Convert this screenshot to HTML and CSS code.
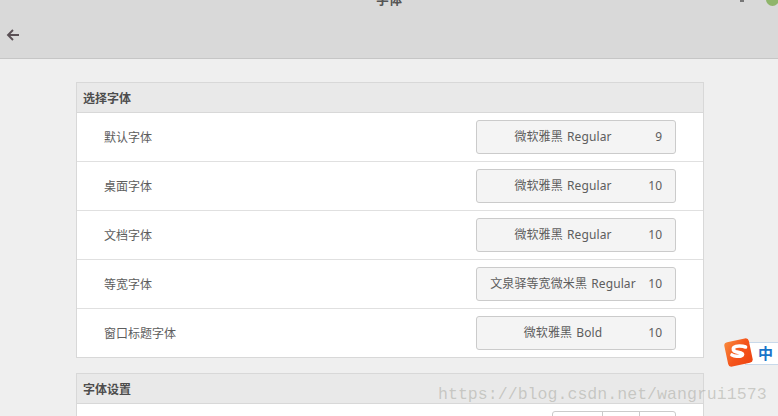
FILE: index.html
```html
<!DOCTYPE html>
<html lang="zh">
<head>
<meta charset="utf-8">
<title>字体</title>
<link rel="stylesheet" href="styles.css">
</head>
<body>
<div class="app">
  <header class="topbar">
    <div class="titlebar">
      <span class="win-title">字体</span>
      <span class="win-min"></span>
      <span class="win-close"></span>
    </div>
    <button class="back" aria-label="返回">
      <svg width="14" height="14" viewBox="0 0 14 14"><path d="M13 7H2.500M7 2 2 7l5 5" fill="none" stroke="#5a5055" stroke-width="1.900"/></svg>
    </button>
  </header>
  <main class="content">
    <section class="panel">
      <h2 class="panel-head">选择字体</h2>
      <div class="row"><span class="label">默认字体</span>
        <button class="font-btn"><span class="font-name">微软雅黑 Regular</span><span class="font-size">9</span></button></div>
      <div class="row"><span class="label">桌面字体</span>
        <button class="font-btn"><span class="font-name">微软雅黑 Regular</span><span class="font-size">10</span></button></div>
      <div class="row"><span class="label">文档字体</span>
        <button class="font-btn"><span class="font-name">微软雅黑 Regular</span><span class="font-size">10</span></button></div>
      <div class="row"><span class="label">等宽字体</span>
        <button class="font-btn"><span class="font-name">文泉驿等宽微米黑 Regular</span><span class="font-size">10</span></button></div>
      <div class="row"><span class="label">窗口标题字体</span>
        <button class="font-btn"><span class="font-name">微软雅黑 Bold</span><span class="font-size">10</span></button></div>
    </section>
    <section class="panel panel-second">
      <h2 class="panel-head">字体设置</h2>
      <div class="row row-seg">
        <div class="segments"><span class="seg seg-a"></span><span class="seg seg-b"></span><span class="seg seg-c"></span></div>
      </div>
    </section>
  </main>
  <div class="watermark">https://blog.csdn.net/wangrui1573</div>
  <div class="ime">
    <svg class="ime-logo" width="30" height="30" viewBox="0 0 30 30">
      <defs>
        <linearGradient id="imeFill" x1="0" y1="0" x2="1" y2="1">
          <stop offset="0" stop-color="#f98a3c"/>
          <stop offset="0.5" stop-color="#f4551c"/>
          <stop offset="1" stop-color="#ee4310"/>
        </linearGradient>
      </defs>
      <rect x="2" y="2" width="25" height="25" rx="3.500" fill="url(#imeFill)" transform="rotate(-12 14.500 14.500)"/>
      <path d="M21.500 9c-2.500-1-9-1.800-11.500.3-1.700 1.800-.6 3.700 2 4.400l5 1.200c2.200.6 2 2.400.3 3-2.300.8-7 .3-9.300-.9" fill="none" stroke="#fff" stroke-width="3.600" stroke-linecap="round"/>
    </svg>
    <span class="ime-text">中</span>
  </div>
</div>
</body>
</html>
```
FILE: styles.css
```css
* { box-sizing: border-box; }
html, body { margin: 0; height: 100%; overflow: hidden; }
body { font-family: "Noto Sans", "Noto Sans CJK SC", sans-serif; color: #5b5b5b; font-size: 12px; }
.app { position: relative; width: 778px; height: 416px; overflow: hidden; background: #efefef; }

.topbar { height: 59px; background: #d9d9d9; border-bottom: 1px solid #c6c6c6; }
.titlebar { height: 0; display: flex; justify-content: center; }
.win-title { margin-top: -10px; font-size: 13px; line-height: 18px; font-weight: 700; color: #555; height: 18px; }
.win-min { position: absolute; left: 740px; top: 0; width: 4px; height: 2px; background: #777; }
.win-close { position: absolute; left: 766px; top: -7px; width: 13px; height: 13px; border-radius: 50%; background: #8fb56b; }
.back { display: block; margin: 0; padding: 0; width: 14px; height: 14px; border: 0; background: none; position: relative; left: 6px; top: 28px; }
.back svg { display: block; }

.content { padding: 23px 74px 0 76px; }
.panel { background: #fff; border: 1px solid #d8d8d8; }
.panel-second { margin-top: 15px; }
.panel-head { margin: 0; height: 30px; padding: 1px 6px 0; font-size: 12px; line-height: 29px; font-weight: 700; color: #4d4d4d; background: #e9e9e9; border-bottom: 1px solid #d8d8d8; }

.row { height: 49px; display: flex; align-items: center; justify-content: space-between; padding: 0 27px; border-bottom: 1px solid #e0e0e0; }
.row:last-child { border-bottom: 0; height: 48px; }
.label { font-size: 12px; color: #5d5d5d; }

.font-btn { width: 200px; height: 34px; display: flex; align-items: center; padding: 0 13px 2px; background: #f4f4f4; border: 1px solid #cbcbcb; border-radius: 3px; font: inherit; color: #5d5d5d; }
.font-name { flex: 1; min-width: 0; text-align: center; font-size: 12px; word-spacing: 1px; letter-spacing: 0.1px; white-space: nowrap; }
.font-size { width: 14px; margin-left: 12px; font-size: 12px; text-align: right; }

.row-seg { justify-content: flex-end; align-items: flex-start; padding-top: 7px; }
.segments { display: flex; height: 34px; background: #fff; border: 1px solid #cbcbcb; border-radius: 3px; }
.seg { display: block; border-left: 1px solid #cbcbcb; }
.seg-a { width: 49px; border-left: 0; }
.seg-b { width: 37px; }
.seg-c { width: 36px; }

.watermark { position: absolute; left: 438px; top: 385px; font-family: "Liberation Mono", monospace; font-size: 16.6px; line-height: 20px; color: rgba(150, 150, 140, 0.42); white-space: nowrap; }

.ime { position: absolute; left: 724px; top: 339px; width: 54px; height: 27px; }
.ime::before { content: ""; position: absolute; left: 21px; top: 3px; right: 0; bottom: 1px; background: #fff; border: 1px solid #c9d9ea; border-right: 0; }
.ime-logo { position: absolute; left: 0; top: -1px; }
.ime-text { position: absolute; left: 34px; top: 4px; font-size: 15px; line-height: 20px; font-weight: 700; color: #1a74c9; }
```
